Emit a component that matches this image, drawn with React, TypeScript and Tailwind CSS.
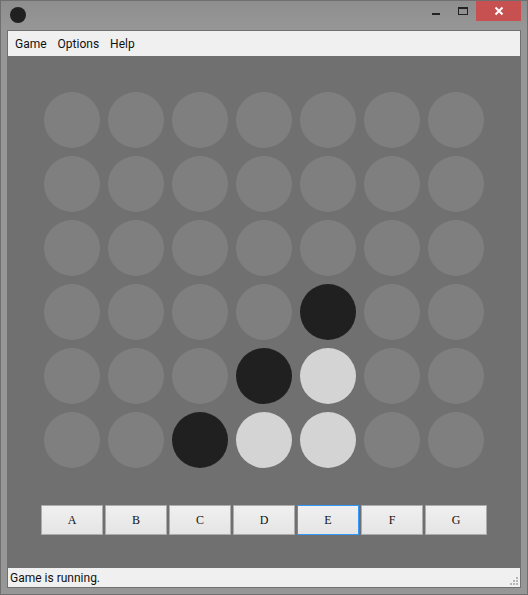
const board = [
  '.......',
  '.......',
  '.......',
  '....b..',
  '...bw..',
  '..bww..',
];

const discColors: Record<string, string> = {
  '.': 'bg-[#7f7f7f]',
  b: 'bg-[#202020]',
  w: 'bg-[#d4d4d4]',
};

const columns = ['A', 'B', 'C', 'D', 'E', 'F', 'G'];

function TitleBar() {
  return (
    <div className="flex h-[29px] items-start">
      <div className="ml-[3px] mt-[6px] h-4 w-4 rounded-full bg-[#202020]" />
      <div className="ml-auto flex items-start">
        <div className="mt-[12px] h-[2px] w-2 bg-[#222222]" />
        <div className="ml-[18px] mt-[6px] h-2 w-[10px] border border-t-2 border-[#222222]" />
        <div className="ml-[8px] flex h-5 w-[45px] items-center justify-center bg-[#c75050]">
          <svg width="10" height="10" viewBox="0 0 10 10">
            <path d="M1.5 1.5 L8.5 8.5 M8.5 1.5 L1.5 8.5" stroke="#ffffff" strokeWidth="2" />
          </svg>
        </div>
      </div>
    </div>
  );
}

function MenuBar() {
  return (
    <div className="flex h-[25px] items-center gap-[11px] bg-[#f0f0f0] pl-[7px] font-['Roboto',sans-serif] text-[12px] text-[#111111]">
      <span>Game</span>
      <span>Options</span>
      <span>Help</span>
    </div>
  );
}

function Board() {
  return (
    <div className="flex flex-col gap-2">
      {board.map((row, r) => (
        <div key={r} className="flex gap-2">
          {row.split('').map((cell, c) => (
            <div key={c} className={`h-14 w-14 rounded-full ${discColors[cell]}`} />
          ))}
        </div>
      ))}
    </div>
  );
}

function ColumnButtons() {
  return (
    <div className="mt-[37px] flex gap-[2px]">
      {columns.map((col) => (
        <button
          key={col}
          className={`h-[30px] w-[62px] border bg-gradient-to-b from-[#f0f0f0] to-[#e5e5e5] font-['Liberation_Serif',serif] text-[12px] text-[#111111] ${
            col === 'E' ? 'border-[#3399ff]' : 'border-[#acacac]'
          }`}
        >
          {col}
        </button>
      ))}
    </div>
  );
}

function StatusBar() {
  return (
    <div className="flex h-[19px] items-center justify-between bg-[#f0f0f0] px-[2px] font-['Roboto',sans-serif] text-[12px] text-[#111111]">
      <span>Game is running.</span>
      <svg width="9" height="9" viewBox="0 0 9 9" className="mb-[1px] self-end">
        <path d="M7 0h2v2H7z M4 3h2v2H4z M7 3h2v2H7z M1 6h2v2H1z M4 6h2v2H4z M7 6h2v2H7z" fill="#b5b5b5" />
      </svg>
    </div>
  );
}

export default function App() {
  return (
    <div className="flex h-[595px] w-[528px] flex-col border border-[#6f6f6f] bg-gradient-to-b from-[#8e8e8e] to-[#979797] to-[30px] px-[6px] pb-[6px]">
      <TitleBar />
      <div className="flex flex-1 flex-col border border-[#707070]">
        <MenuBar />
        <div className="flex flex-1 flex-col items-center bg-[#707070] pt-9">
          <Board />
          <ColumnButtons />
        </div>
        <StatusBar />
      </div>
    </div>
  );
}
